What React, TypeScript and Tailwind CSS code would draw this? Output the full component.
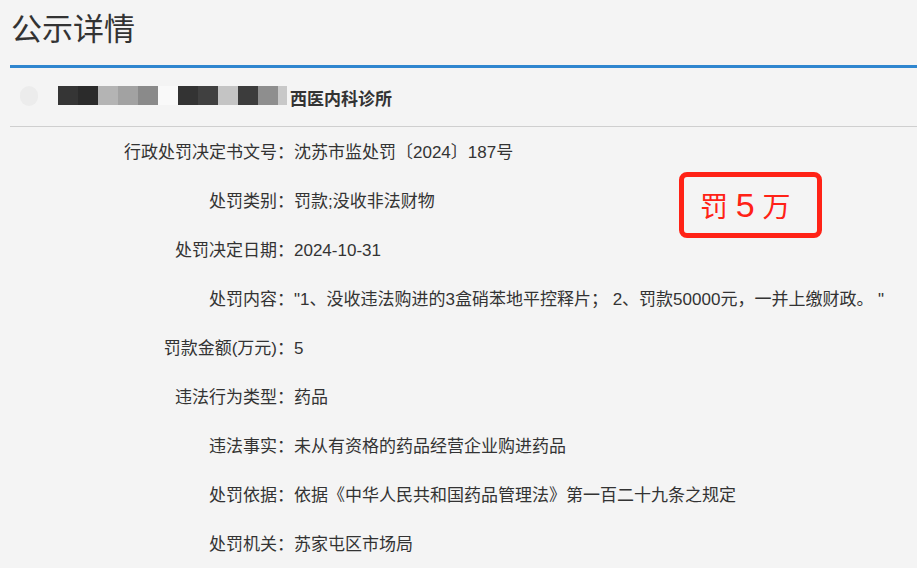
import React from 'react';

const rows: { label: string; value: string }[] = [
  { label: '行政处罚决定书文号：', value: '沈苏市监处罚〔2024〕187号' },
  { label: '处罚类别：', value: '罚款;没收非法财物' },
  { label: '处罚决定日期：', value: '2024-10-31' },
  { label: '处罚内容：', value: '"1、没收违法购进的3盒硝苯地平控释片； 2、罚款50000元，一并上缴财政。 "' },
  { label: '罚款金额(万元)：', value: '5' },
  { label: '违法行为类型：', value: '药品' },
  { label: '违法事实：', value: '未从有资格的药品经营企业购进药品' },
  { label: '处罚依据：', value: '依据《中华人民共和国药品管理法》第一百二十九条之规定' },
  { label: '处罚机关：', value: '苏家屯区市场局' },
];

// mosaic blocks covering the redacted name
const mosaic: { w: string; c: string }[] = [
  { w: 'w-[20px]', c: 'bg-[#353535]' },
  { w: 'w-[20px]', c: 'bg-[#2b2b2b]' },
  { w: 'w-[20px]', c: 'bg-[#b4b4b4]' },
  { w: 'w-[20px]', c: 'bg-[#a2a2a2]' },
  { w: 'w-[20px]', c: 'bg-[#8a8a8a]' },
  { w: 'w-[20px]', c: 'bg-[#f9f9f9]' },
  { w: 'w-[20px]', c: 'bg-[#333333]' },
  { w: 'w-[20px]', c: 'bg-[#404040]' },
  { w: 'w-[20px]', c: 'bg-[#c4c4c4]' },
  { w: 'w-[20px]', c: 'bg-[#3c3c3c]' },
  { w: 'w-[20px]', c: 'bg-[#8e8e8e]' },
  { w: 'w-[9px]', c: 'bg-[#c8c8c8]' },
];

export default function App() {
  return (
    <div
      className="relative w-full h-[568px] overflow-hidden bg-[#f4f4f4] text-[#333]"
      style={{ fontFamily: '"Liberation Sans", "Noto Sans CJK SC", sans-serif' }}
    >
      <h1 className="h-[65px] pl-[11px] pt-[9px] text-[31px] leading-[42px] font-normal text-[#333]">公示详情</h1>
      <div className="ml-[10px] h-[3px] bg-[#2f86cf]" />

      <div className="ml-[10px] h-[59px] flex items-center border-b border-[#cfcfcf]">
        <div className="ml-[10px] mt-[-3px] w-[18px] h-[20px] rounded-full bg-[#ececec]" />
        <div className="ml-[20px] mt-[-4px] flex h-[19px]">
          {mosaic.map((m, i) => (
            <div key={i} className={`${m.w} ${m.c} h-full`} />
          ))}
        </div>
        <span className="ml-[3px] mt-[6px] text-[17px] font-bold text-[#333]">西医内科诊所</span>
      </div>

      <div className="grid grid-cols-[294px_1fr] pt-[1px] text-[17px]">
        {rows.map((r) => (
          <React.Fragment key={r.label}>
            <div className="h-[49px] flex items-center justify-end whitespace-nowrap">{r.label}</div>
            <div className="h-[49px] flex items-center whitespace-nowrap">{r.value}</div>
          </React.Fragment>
        ))}
      </div>

      {/* red annotation */}
      <div className="absolute left-[679px] top-[172px] w-[143px] h-[66px] border-[5px] border-[#ff2216] rounded-[8px] flex items-center pl-[16px]">
        <span className="text-[28px] leading-none text-[#ff2216] whitespace-pre">
          罚 <span className="text-[34px]">5</span> 万
        </span>
      </div>
    </div>
  );
}
